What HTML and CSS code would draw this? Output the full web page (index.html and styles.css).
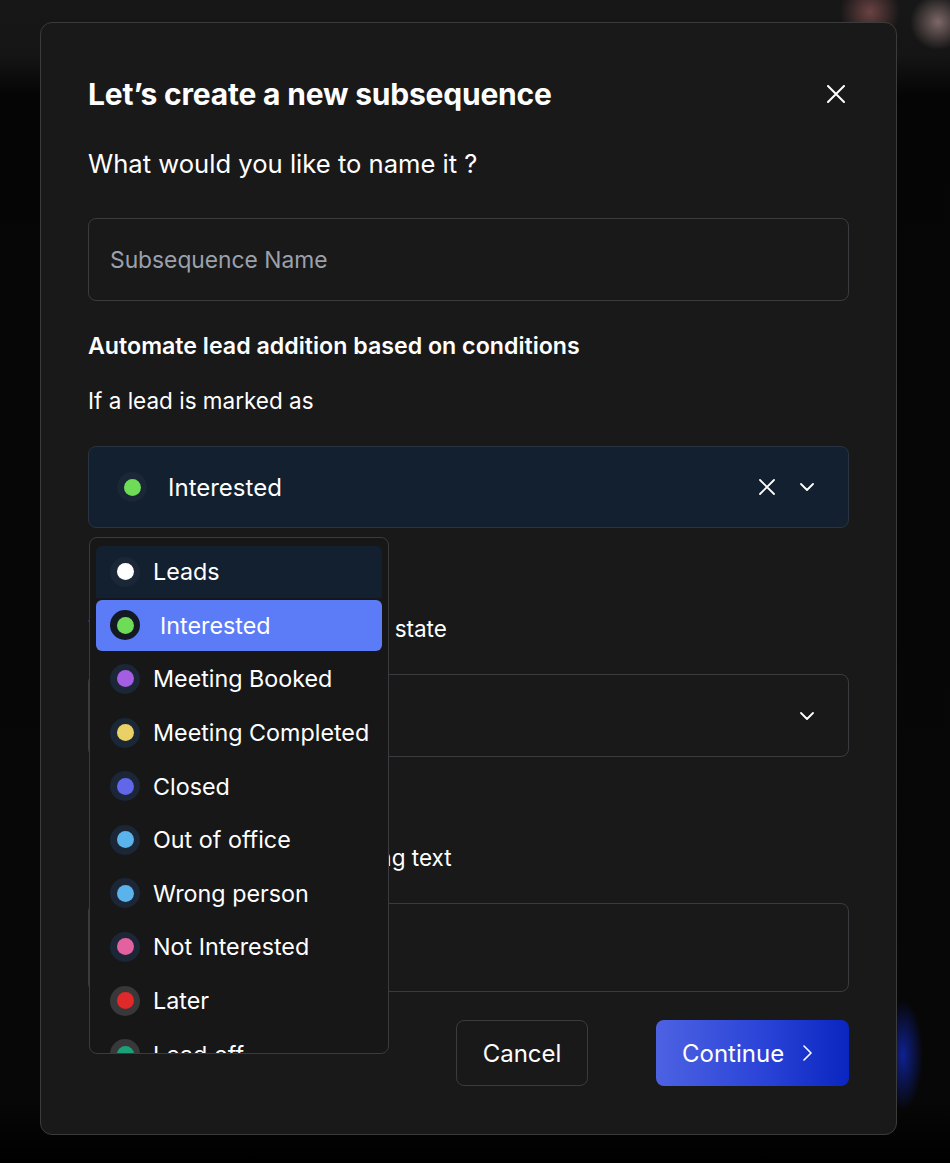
FILE: index.html
```html
<html>
<head>
    <meta charset="UTF-8">
    <meta name="viewport" content="width=device-width, initial-scale=1.0">
    <title>New subsequence</title>
    <link rel="stylesheet" href="styles.css">
</head>

<body>
    <div class="modal">
        <div class="modal-header">
            <h1>Let’s create a new subsequence</h1>
            <svg class="close" width="18" height="18" viewBox="0 0 18 18">
                <path d="M1 1L17 17M17 1L1 17" stroke="#fff" stroke-width="2" stroke-linecap="round"/>
            </svg>
        </div>
        <p class="question">What would you like to name it ?</p>
        <div class="field">
            <span class="placeholder">Subsequence Name</span>
        </div>

        <h2>Automate lead addition based on conditions</h2>
        <p class="label">If a lead is marked as</p>

        <div class="select-wrap">
            <div class="select active">
                <span class="ring"><span class="dot green"></span></span>
                <span class="value">Interested</span>
                <span class="icons">
                    <svg width="16" height="16" viewBox="0 0 16 16">
                        <path d="M1 1L15 15M15 1L1 15" stroke="#fff" stroke-width="1.8" stroke-linecap="round"/>
                    </svg>
                    <svg width="14" height="8" viewBox="0 0 14 8">
                        <path d="M1 1L7 7L13 1" stroke="#fff" stroke-width="1.8" fill="none" stroke-linecap="round" stroke-linejoin="round"/>
                    </svg>
                </span>
            </div>

            <ul class="menu">
                <li class="hovered"><span class="ring"><span class="dot white"></span></span>Leads</li>
                <li class="selected"><span class="ring"><span class="dot green"></span></span>Interested</li>
                <li><span class="ring"><span class="dot purple"></span></span>Meeting Booked</li>
                <li><span class="ring"><span class="dot yellow"></span></span>Meeting Completed</li>
                <li><span class="ring"><span class="dot indigo"></span></span>Closed</li>
                <li><span class="ring"><span class="dot sky"></span></span>Out of office</li>
                <li><span class="ring"><span class="dot sky"></span></span>Wrong person</li>
                <li><span class="ring"><span class="dot pink"></span></span>Not Interested</li>
                <li><span class="ring grey"><span class="dot red"></span></span>Later</li>
                <li><span class="ring grey"><span class="dot teal"></span></span>Lead off</li>
            </ul>
        </div>

        <p class="label far">Then move the lead into this state</p>
        <div class="select">
            <span class="value"></span>
            <span class="icons">
                <svg width="14" height="8" viewBox="0 0 14 8">
                    <path d="M1 1L7 7L13 1" stroke="#fff" stroke-width="1.8" fill="none" stroke-linecap="round" stroke-linejoin="round"/>
                </svg>
            </span>
        </div>

        <p class="label far">If a lead replies with matching text</p>
        <div class="field tall"></div>

        <div class="actions">
            <button class="btn-cancel">Cancel</button>
            <button class="btn-continue">Continue
                <svg width="9" height="16" viewBox="0 0 9 16">
                    <path d="M1 1L8 8L1 15" stroke="#fff" stroke-width="1.6" fill="none" stroke-linecap="round" stroke-linejoin="round"/>
                </svg>
            </button>
        </div>
    </div>
</body>
</html>
```

FILE: styles.css
```css
body {
    margin: 0;
    padding: 22px 0 29px 40px;
    min-height: 1163px;
    box-sizing: border-box;
    color: #fff;
    font-family: Inter, "Noto Sans", sans-serif;
    background:
        radial-gradient(ellipse 20px 55px at 903px 1055px, rgba(20, 50, 235, .6), rgba(20, 50, 235, 0)),
        radial-gradient(circle 30px at 870px 12px, rgba(190, 110, 110, .5), rgba(190, 110, 110, 0)),
        radial-gradient(circle 28px at 938px 22px, rgba(210, 170, 170, .55), rgba(210, 170, 170, 0)),
        linear-gradient(#171717 0, #151515 55px, #050505 95px, #070707 1100px, #000 1163px);
}
.modal {
    width: 857px;
    box-sizing: border-box;
    background: #191919;
    border: 1px solid #3b3b3b;
    border-radius: 12px;
    padding: 53px 47px 48px;
}
.modal-header {
    display: flex;
    align-items: center;
    justify-content: space-between;
}
h1 {
    margin: 0;
    font-size: 30px;
    line-height: 36px;
    font-weight: 700;
    letter-spacing: -0.2px;
}
.close {
    margin-right: 4px;
}
.question {
    margin: 36px 0 0;
    font-size: 25.6px;
    line-height: 32px;
}
.field {
    margin-top: 38px;
    height: 83px;
    box-sizing: border-box;
    border: 1px solid #3a3b3e;
    border-radius: 8px;
    padding-left: 21px;
    display: flex;
    align-items: center;
}
.field.tall {
    margin-top: 30px;
    height: 89px;
}
.placeholder {
    color: #9ba1ad;
    font-size: 22.8px;
}
h2 {
    margin: 30px 0 0;
    font-size: 23.2px;
    line-height: 30px;
    font-weight: 600;
}
.label {
    margin: 25px 0 0;
    font-size: 22.5px;
    line-height: 30px;
}
.label.far {
    margin-top: 86px;
}
.select-wrap {
    position: relative;
    margin-top: 30px;
}
.select {
    height: 83px;
    box-sizing: border-box;
    border: 1px solid #3a3b3e;
    border-radius: 8px;
    display: flex;
    align-items: center;
    padding: 0 34px 0 28px;
    margin-top: 30px;
}
.select.active {
    margin-top: 0;
    height: 82px;
    background: #13202f;
    border-color: #2a3340;
}
.select .value {
    flex: 1;
    margin-left: 21px;
    font-size: 24px;
}
.select .icons {
    display: flex;
    align-items: center;
    gap: 25px;
}
.ring {
    width: 30px;
    height: 30px;
    border-radius: 50%;
    background: #1b2637;
    display: flex;
    align-items: center;
    justify-content: center;
    flex-shrink: 0;
}
.ring.grey {
    background: #38383b;
}
.dot {
    width: 17px;
    height: 17px;
    border-radius: 50%;
}
.white { background: #ffffff; }
.green { background: #6fdc58; }
.purple { background: #a45ee2; }
.yellow { background: #e9d067; }
.indigo { background: #6167e8; }
.sky { background: #5ab3ea; }
.pink { background: #e262a0; }
.red { background: #e0292b; }
.teal { background: #1f9f78; }

.menu {
    position: absolute;
    top: calc(100% + 9px);
    left: 1px;
    width: 300px;
    height: 517px;
    box-sizing: border-box;
    margin: 0;
    padding: 8px 6px 0;
    list-style: none;
    background: #171717;
    border: 1px solid #3a3b3e;
    border-radius: 8px;
    overflow: hidden;
    display: flex;
    flex-direction: column;
    gap: 2px;
    z-index: 2;
}
.menu li {
    height: 51.6px;
    flex-shrink: 0;
    display: flex;
    align-items: center;
    gap: 13px;
    padding-left: 14px;
    border-radius: 6px;
    font-size: 23.3px;
}
.menu li.hovered {
    background: #12202f;
    border-radius: 6px 6px 0 0;
}
.menu li.selected {
    background: #5b7cf6;
    gap: 20px;
}
.menu li.selected .ring {
    background: #131a24;
}
.actions {
    margin-top: 28px;
    display: flex;
    justify-content: flex-end;
    gap: 68px;
}
.actions button {
    height: 66px;
    border-radius: 8px;
    font-family: inherit;
    font-size: 24px;
    color: #fff;
    cursor: pointer;
}
.btn-cancel {
    width: 132px;
    background: transparent;
    border: 1px solid #3a3b3e;
}
.btn-continue {
    width: 193px;
    border: 0;
    background: linear-gradient(90deg, #4d62e2, #2b44d8 55%, #0a26c0);
    display: flex;
    align-items: center;
    padding-left: 26px;
    gap: 19px;
}
```
